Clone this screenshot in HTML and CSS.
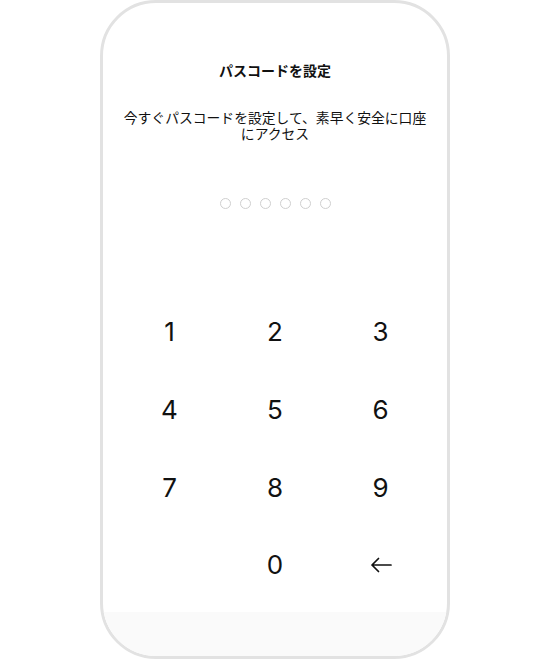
FILE: index.html
```html
<!DOCTYPE html>
<html lang="ja">
<head>
<meta charset="utf-8">
<link rel="stylesheet" href="styles.css">
</head>
<body>
<div class="phone">
  <h1 class="title">パスコードを設定</h1>
  <p class="subtitle">今すぐパスコードを設定して、素早く安全に口座にアクセス</p>
  <div class="dots">
    <span class="dot"></span><span class="dot"></span><span class="dot"></span><span class="dot"></span><span class="dot"></span><span class="dot"></span>
  </div>
  <div class="keypad">
    <div class="key">1</div><div class="key">2</div><div class="key">3</div>
    <div class="key">4</div><div class="key">5</div><div class="key">6</div>
    <div class="key">7</div><div class="key">8</div><div class="key">9</div>
    <div class="key empty"></div><div class="key">0</div>
    <div class="key">
      <svg width="22" height="16" viewBox="0 0 22 16" fill="none" stroke="#111" stroke-width="1.7" stroke-linecap="round" stroke-linejoin="round"><path d="M21 8H2M8.5 1.5L2 8l6.5 6.5"/></svg>
    </div>
  </div>
  <div class="home"></div>
</div>
</body>
</html>
```
FILE: styles.css
```css
html, body {
  margin: 0;
  padding: 0;
  background: #fff;
}
body {
  font-family: "Noto Sans CJK JP", "Noto Sans", sans-serif;
  color: #111;
}
.phone {
  box-sizing: border-box;
  width: 350px;
  height: 659px;
  margin: 0 auto;
  border: 3px solid #e2e2e2;
  border-radius: 56px;
  overflow: hidden;
  display: flex;
  flex-direction: column;
  align-items: center;
}
.title {
  margin: 57px 0 0;
  font-size: 14px;
  line-height: 20px;
  font-weight: 700;
}
.subtitle {
  margin: 29px 0 0;
  width: 316px;
  text-align: center;
  font-size: 13.8px;
  line-height: 16px;
  font-weight: 400;
}
.dots {
  margin-top: 57px;
  display: flex;
  gap: 9px;
}
.dot {
  box-sizing: border-box;
  width: 11px;
  height: 11px;
  border: 1px solid #cfcfcf;
  border-radius: 50%;
}
.keypad {
  margin-top: 84px;
  display: grid;
  grid-template-columns: repeat(3, 105.5px);
  grid-auto-rows: 77.7px;
}
.key {
  display: flex;
  align-items: center;
  justify-content: center;
  font-family: "Inter", "Roboto", sans-serif;
  font-weight: 400;
  font-size: 26px;
  color: #111;
}
.home {
  margin-top: auto;
  align-self: stretch;
  height: 44px;
  background: #fafafa;
}
```
